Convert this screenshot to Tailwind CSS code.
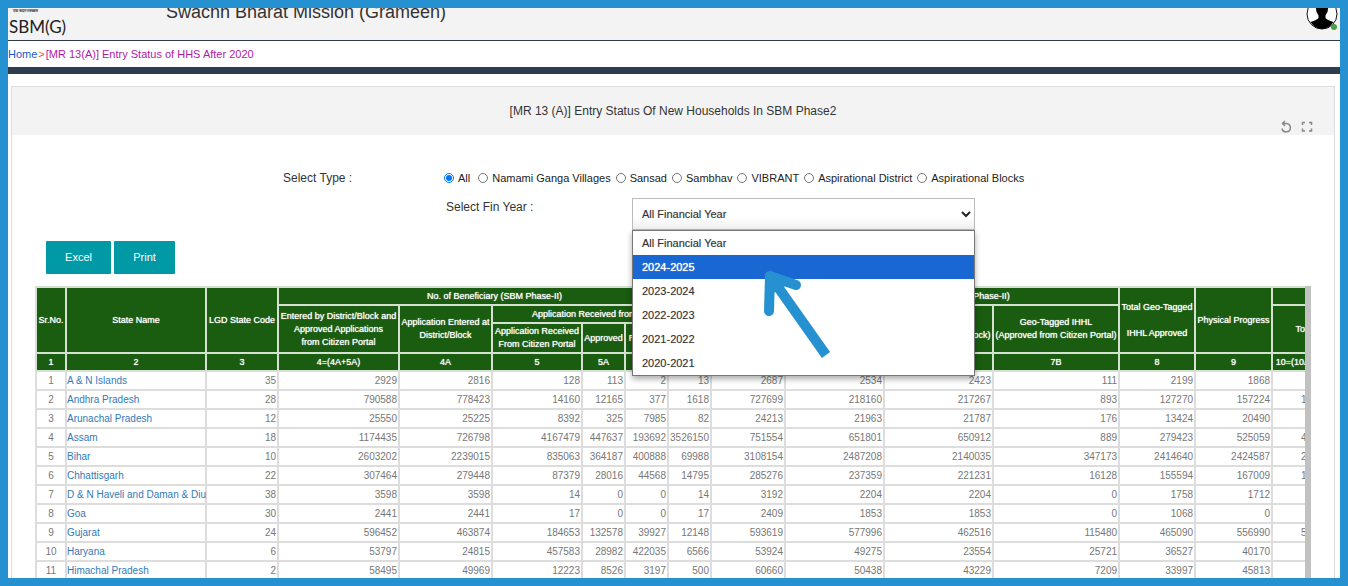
<!DOCTYPE html>
<html lang="en">
<head>
<meta charset="utf-8">
<meta name="viewport" content="width=device-width, initial-scale=1">
<title>Swachh Bharat Mission (Grameen)</title>
<script src="https://cdn.jsdelivr.net/npm/@tailwindcss/browser@4"></script>
</head>
<body class="font-['Liberation_Sans',Arial,sans-serif] text-[#333]">
<div class="h-screen overflow-hidden border-8 border-[#2691d0] bg-white">

  <header class="flex h-[33px] items-start overflow-hidden border-b border-[#2f3a4a] bg-[#f3f3f3]">
    <div class="w-[158px] pl-px">
      <p class="-mt-1 pl-1 text-[4px] leading-[14px] font-bold text-[#333]">एक कदम स्वच्छता</p>
      <p class="-mt-px font-['Lato',sans-serif] text-[17px] leading-[20px] text-[#222]">SBM(G)</p>
    </div>
    <h1 class="-mt-2 flex-1 text-[18px] leading-[24px]">Swachh Bharat Mission (Grameen)</h1>
    <button type="button" aria-label="Profile" class="-mt-[10px] mr-px">
      <svg class="block" width="34" height="34" viewBox="0 0 34 34">
        <circle cx="17" cy="16" r="15" fill="#fff" stroke="#111" stroke-width="1"/>
        <path d="M11 9 Q11 3 17 3 T23 9 Q23.500 14 20.500 17.500 V20 Q22 22 28.500 24 Q24 31 17 31 T5.500 24 Q12 22 13.500 20 V17.500 Q10.500 14 11 9Z" fill="#000"/>
        <circle cx="29" cy="29" r="3" fill="#4a9e45"/>
      </svg>
    </button>
  </header>

  <nav class="flex h-[26px] items-center gap-px pb-px text-[11px] leading-[14px]">
    <a href="#" class="text-[#2456d0]">Home</a>
    <span class="text-[#e0561c]">&gt;</span>
    <a href="#" class="text-[#b01aa8]">[MR 13(A)] Entry Status of HHS After 2020</a>
  </nav>
  <div class="h-[7px] bg-[#2d3c4f]"></div>

  <main class="mt-3 mr-[5px] ml-[3px] border border-[#ddd]">
    <div class="relative flex h-12 items-center justify-center bg-[#f3f3f3]">
      <h2 class="text-[12px] leading-[14px]">[MR 13 (A)] Entry Status Of New Households In SBM Phase2</h2>
      <div class="absolute right-5 bottom-px flex gap-[7px]">
        <button type="button" aria-label="Reload">
          <svg class="block" width="14" height="14" viewBox="0 0 14 14" fill="none" stroke="#888" stroke-width="1.500"><path d="M3.500 3.500 H7.500 A4.200 4.200 0 1 1 3 8.500"/><path d="M6 1 L3.500 3.500 L6 6"/></svg>
        </button>
        <button type="button" aria-label="Full screen">
          <svg class="block" width="14" height="14" viewBox="0 0 14 14" fill="none" stroke="#888" stroke-width="1.500"><path d="M2.500 5 V2.500 H5 M9 2.500 H11.500 V5 M11.500 8.500 V11 H9 M5 11 H2.500 V8.500"/></svg>
        </button>
      </div>
    </div>

    <form class="pt-[33px]">
      <div class="flex h-5 items-center pl-[271px]">
        <span id="type-label" class="w-[161px] text-[12px] leading-[14px]">Select Type :</span>
        <div role="radiogroup" aria-labelledby="type-label" class="flex items-center gap-[5px] text-[11px] leading-[14px] whitespace-nowrap text-[#222]">
          <label class="mr-[3px] flex items-center gap-1"><input type="radio" name="type" checked class="m-0 size-[10px] accent-[#0075ff]">All</label>
          <label class="flex items-center gap-1"><input type="radio" name="type" class="m-0 size-[10px]">Namami Ganga Villages</label>
          <label class="flex items-center gap-1"><input type="radio" name="type" class="m-0 size-[10px]">Sansad</label>
          <label class="flex items-center gap-1"><input type="radio" name="type" class="m-0 size-[10px]">Sambhav</label>
          <label class="flex items-center gap-1"><input type="radio" name="type" class="m-0 size-[10px]">VIBRANT</label>
          <label class="flex items-center gap-1"><input type="radio" name="type" class="m-0 size-[10px]">Aspirational District</label>
          <label class="flex items-center gap-1"><input type="radio" name="type" class="m-0 size-[10px]">Aspirational Blocks</label>
        </div>
      </div>

      <div class="mt-[10px] flex items-start pl-[434px]">
        <label for="year" class="w-[186px] pt-[2px] text-[12px] leading-[14px]">Select Fin Year :</label>
        <div class="relative w-[343px] text-[11px]">
          <select id="year" class="block h-8 w-full appearance-none border border-[#bbb] bg-linear-to-b from-white from-60% to-[#f0f0f0] pl-[9px] text-[11px] text-[#333] [text-shadow:0_0_1px_#8888]">
            <option>All Financial Year</option><option>2024-2025</option><option>2023-2024</option><option>2022-2023</option><option>2021-2022</option><option>2020-2021</option>
          </select>
          <svg class="pointer-events-none absolute top-3 right-1" width="10" height="9" viewBox="0 0 10 9" fill="none" stroke="#222" stroke-width="2"><path d="M1 2 L5 6 L9 2"/></svg>
          <ul role="listbox" aria-label="Select Fin Year" class="absolute top-full left-0 z-10 w-full border border-[#777] bg-white text-[#333] shadow-[0_3px_6px_#0005] [text-shadow:0_0_1px_#8888]">
            <li role="option" class="h-6 pl-[9px] leading-[24px]">All Financial Year</li>
            <li role="option" aria-selected="true" class="h-6 bg-[#1967d2] pl-[9px] leading-[24px] text-white [text-shadow:0_0_1px_#fff]">2024-2025</li>
            <li role="option" class="h-6 pl-[9px] leading-[24px]">2023-2024</li>
            <li role="option" class="h-6 pl-[9px] leading-[24px]">2022-2023</li>
            <li role="option" class="h-6 pl-[9px] leading-[24px]">2021-2022</li>
            <li role="option" class="h-6 pl-[9px] leading-[24px]">2020-2021</li>
          </ul>
          <svg class="pointer-events-none absolute top-[70px] left-[128px] z-20" width="76" height="92" viewBox="0 0 76 92" fill="none" stroke="#2691d0" stroke-width="10">
            <path d="M66 87 L13 12"/>
            <path d="M9 43 L10 8 L36 17" stroke-linecap="round" stroke-linejoin="round"/>
            <path d="M10 8 L27 16 L21 22 L10 26 Z" fill="#2691d0" stroke="none"/>
          </svg>
        </div>
      </div>

      <div class="mt-[11px] flex gap-[3px] pl-[34px] text-[11px] text-white [text-shadow:0_0_1px_#fff]">
        <button type="button" class="h-[33px] w-[65px] rounded-[1px] bg-[#0099a5]">Excel</button>
        <button type="button" class="h-[33px] w-[61px] rounded-[1px] bg-[#0099a5]">Print</button>
      </div>
    </form>

    <div class="mt-3 flex px-[23px]">
      <div class="min-w-0 flex-1 overflow-hidden">
        <table class="w-[1302px] table-fixed border-collapse text-[10px] leading-[13px] text-[#777]">
          <colgroup>
            <col class="w-[30px]"><col class="w-[140px]"><col class="w-[72px]"><col class="w-[121px]"><col class="w-[93px]"><col class="w-[90px]"><col class="w-[43px]"><col class="w-[43px]"><col class="w-[43px]"><col class="w-[74px]"><col class="w-[99px]"><col class="w-[109px]"><col class="w-[126px]"><col class="w-[76px]"><col class="w-[77px]"><col class="w-[66px]">
          </colgroup>
          <thead class="bg-[#1a5c10] text-[9px] whitespace-nowrap text-white [&_th]:border-2 [&_th]:border-[#d5e2d2] [&_th]:p-0 [&_th]:font-normal [&_th]:[text-shadow:0_0_1px_#fff]">
            <tr class="h-[18px]">
              <th rowspan="3">Sr.No.</th>
              <th rowspan="3">State Name</th>
              <th rowspan="3">LGD State Code</th>
              <th colspan="6">No. of Beneficiary (SBM Phase-II)</th>
              <th rowspan="3">Total IHHL</th>
              <th colspan="3">No. of IHHLs (SBM Phase-II)</th>
              <th rowspan="3">Total Geo-Tagged<br><br>IHHL Approved</th>
              <th rowspan="3">Physical Progress</th>
              <th></th>
            </tr>
            <tr class="h-[18px]">
              <th rowspan="2">Entered by District/Block and<br>Approved Applications<br>from Citizen Portal</th>
              <th rowspan="2">Application Entered at<br>District/Block</th>
              <th colspan="4">Application Received from Citizens</th>
              <th rowspan="2">Geo-Tagged IHHL</th>
              <th rowspan="2">Geo-Tagged IHHL<br>(Entered by District/Block)</th>
              <th rowspan="2">Geo-Tagged IHHL<br>(Approved from Citizen Portal)</th>
              <th rowspan="2">Total</th>
            </tr>
            <tr class="h-[30px]">
              <th>Application Received<br>From Citizen Portal</th>
              <th>Approved</th>
              <th>Rejected</th>
              <th>Pending</th>
            </tr>
            <tr class="h-[18px]">
              <th>1</th><th>2</th><th>3</th><th>4=(4A+5A)</th><th>4A</th><th>5</th><th>5A</th><th>5B</th><th>5C</th><th>6</th><th>7</th><th>7A</th><th>7B</th><th>8</th><th>9</th><th>10=(10A+10B)</th>
            </tr>
          </thead>
          <tbody id="rows"></tbody>
        </table>
      </div>
      <div class="w-[6px] bg-[#c1c1c1]"></div>
    </div>
  </main>
</div>
<script>
const data = [
  ["A & N Islands",35,2929,2816,128,113,2,13,2687,2534,2423,111,2199,1868,""],
  ["Andhra Pradesh",28,790588,778423,14160,12165,377,1618,727699,218160,217267,893,127270,157224,"1"],
  ["Arunachal Pradesh",12,25550,25225,8392,325,7985,82,24213,21963,21787,176,13424,20490,""],
  ["Assam",18,1174435,726798,4167479,447637,193692,3526150,751554,651801,650912,889,279423,525059,"4"],
  ["Bihar",10,2603202,2239015,835063,364187,400888,69988,3108154,2487208,2140035,347173,2414640,2424587,"2"],
  ["Chhattisgarh",22,307464,279448,87379,28016,44568,14795,285276,237359,221231,16128,155594,167009,"1"],
  ["D & N Haveli and Daman & Diu",38,3598,3598,14,0,0,14,3192,2204,2204,0,1758,1712,""],
  ["Goa",30,2441,2441,17,0,0,17,2409,1853,1853,0,1068,0,""],
  ["Gujarat",24,596452,463874,184653,132578,39927,12148,593619,577996,462516,115480,465090,556990,"5"],
  ["Haryana",6,53797,24815,457583,28982,422035,6566,53924,49275,23554,25721,36527,40170,""],
  ["Himachal Pradesh",2,58495,49969,12223,8526,3197,500,60660,50438,43229,7209,33997,45813,""]
];
document.getElementById("rows").innerHTML = data.map((r, i) =>
  `<tr class="h-[19px]"><td class="border-2 border-[#ddd] p-0 text-center">${i + 1}</td>` +
  `<td class="border-2 border-[#ddd] p-0 whitespace-nowrap"><a href="#" class="text-[#337ab7]">${r[0].replaceAll("&", "&amp;")}</a></td>` +
  r.slice(1, 14).map(v => `<td class="border-2 border-[#ddd] p-0 pr-px text-right">${v}</td>`).join("") +
  `<td class="border-2 border-[#ddd] p-0 pl-7">${r[14]}</td></tr>`
).join("");
</script>
</body>
</html>
